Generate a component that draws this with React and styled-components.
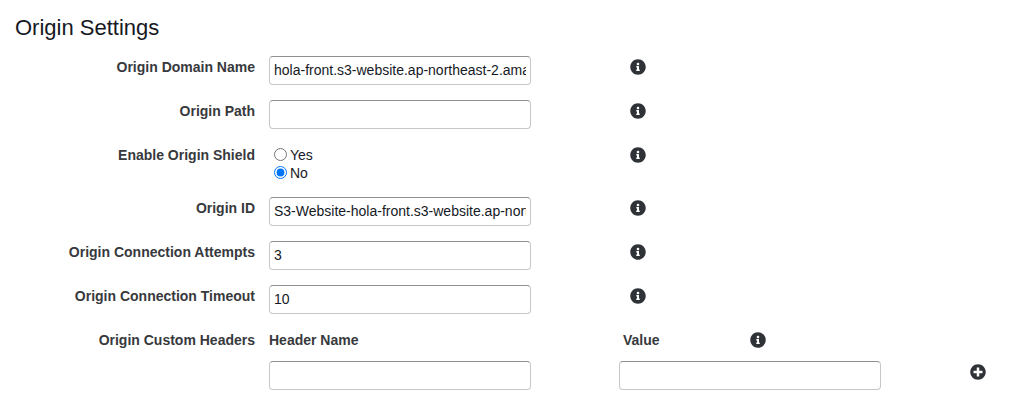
import React from 'react';
import styled, { createGlobalStyle } from 'styled-components';
import { FaInfoCircle, FaPlusCircle } from 'react-icons/fa';

const GlobalStyle = createGlobalStyle`
  html, body {
    margin: 0;
    background: #fff;
  }
  body {
    font-family: "Liberation Sans", Arial, sans-serif;
    color: #16191f;
  }
`;

const Page = styled.div`
  width: 1027px;
  height: 407px;
  overflow: hidden;
  padding-top: 15px;
  box-sizing: border-box;
`;

const Title = styled.h2`
  margin: 0 0 15px 15px;
  height: 26px;
  font-size: 22px;
  line-height: 26px;
  font-weight: 400;
  color: #16191f;
`;

const Form = styled.div`
  display: flex;
  flex-direction: column;
  gap: 15px;
`;

const Row = styled.div`
  display: flex;
  align-items: flex-start;
  height: ${p => p.$height || 29}px;
`;

const Label = styled.label`
  flex: none;
  width: 255px;
  padding-top: 3px;
  text-align: right;
  font-size: 14px;
  line-height: 16px;
  font-weight: 700;
  color: #37393d;
`;

const TextInput = styled.input`
  flex: none;
  box-sizing: border-box;
  width: 262px;
  height: 29px;
  margin: 0 0 0 ${p => p.$left || 14}px;
  padding: 0 4px 2px;
  border: 1px solid #c6c8c8;
  border-top-color: #8f9293;
  border-radius: 4px;
  background: #fff;
  font-family: inherit;
  font-size: 14px;
  color: #16191f;
  outline: none;
`;

const InfoIcon = styled(FaInfoCircle)`
  flex: none;
  width: 16px;
  height: 16px;
  margin-top: 3px;
  margin-left: ${p => p.$left ?? 99}px;
  color: #2f3237;
`;

const PlusIcon = styled(FaPlusCircle)`
  flex: none;
  width: 16px;
  height: 16px;
  margin-top: 3px;
  margin-left: 89px;
  color: #2f3237;
`;

const RadioGroup = styled.div`
  flex: none;
  width: 262px;
  margin-left: 14px;
  padding-top: 2px;
`;

const RadioLine = styled.label`
  display: flex;
  align-items: center;
  height: 18px;
  font-size: 14px;
  color: #16191f;
`;

const Radio = styled.input`
  margin: 0 3px 2px 5px;
  width: 13px;
  height: 13px;
`;

const ColumnHead = styled.span`
  flex: none;
  width: ${p => p.$width}px;
  margin-left: ${p => p.$left}px;
  padding-top: 3px;
  font-size: 14px;
  line-height: 16px;
  font-weight: 700;
  color: #37393d;
`;

const Spacer = styled.div`
  flex: none;
  width: 255px;
`;

const fields = [
  { label: 'Origin Domain Name', value: 'hola-front.s3-website.ap-northeast-2.amazonaws.com' },
  { label: 'Origin Path', value: '' },
  { label: 'Enable Origin Shield', radio: true },
  { label: 'Origin ID', value: 'S3-Website-hola-front.s3-website.ap-northeast-2.amazonaws.com' },
  { label: 'Origin Connection Attempts', value: '3' },
  { label: 'Origin Connection Timeout', value: '10' },
];

export default function App() {
  return (
    <Page>
      <GlobalStyle />
      <Title>Origin Settings</Title>
      <Form>
        {fields.map(f => (
          <Row key={f.label} $height={f.radio ? 38 : 29}>
            <Label>{f.label}</Label>
            {f.radio ? (
              <RadioGroup>
                <RadioLine><Radio type="radio" name="shield" />Yes</RadioLine>
                <RadioLine><Radio type="radio" name="shield" defaultChecked />No</RadioLine>
              </RadioGroup>
            ) : (
              <TextInput type="text" defaultValue={f.value} />
            )}
            <InfoIcon />
          </Row>
        ))}
        <Row $height={17}>
          <Label>Origin Custom Headers</Label>
          <ColumnHead $left={14} $width={262}>Header Name</ColumnHead>
          <ColumnHead $left={92} $width={127}>Value</ColumnHead>
          <InfoIcon $left={0} />
        </Row>
        <Row>
          <Spacer />
          <TextInput type="text" />
          <TextInput type="text" $left={88} />
          <PlusIcon />
        </Row>
      </Form>
    </Page>
  );
}
